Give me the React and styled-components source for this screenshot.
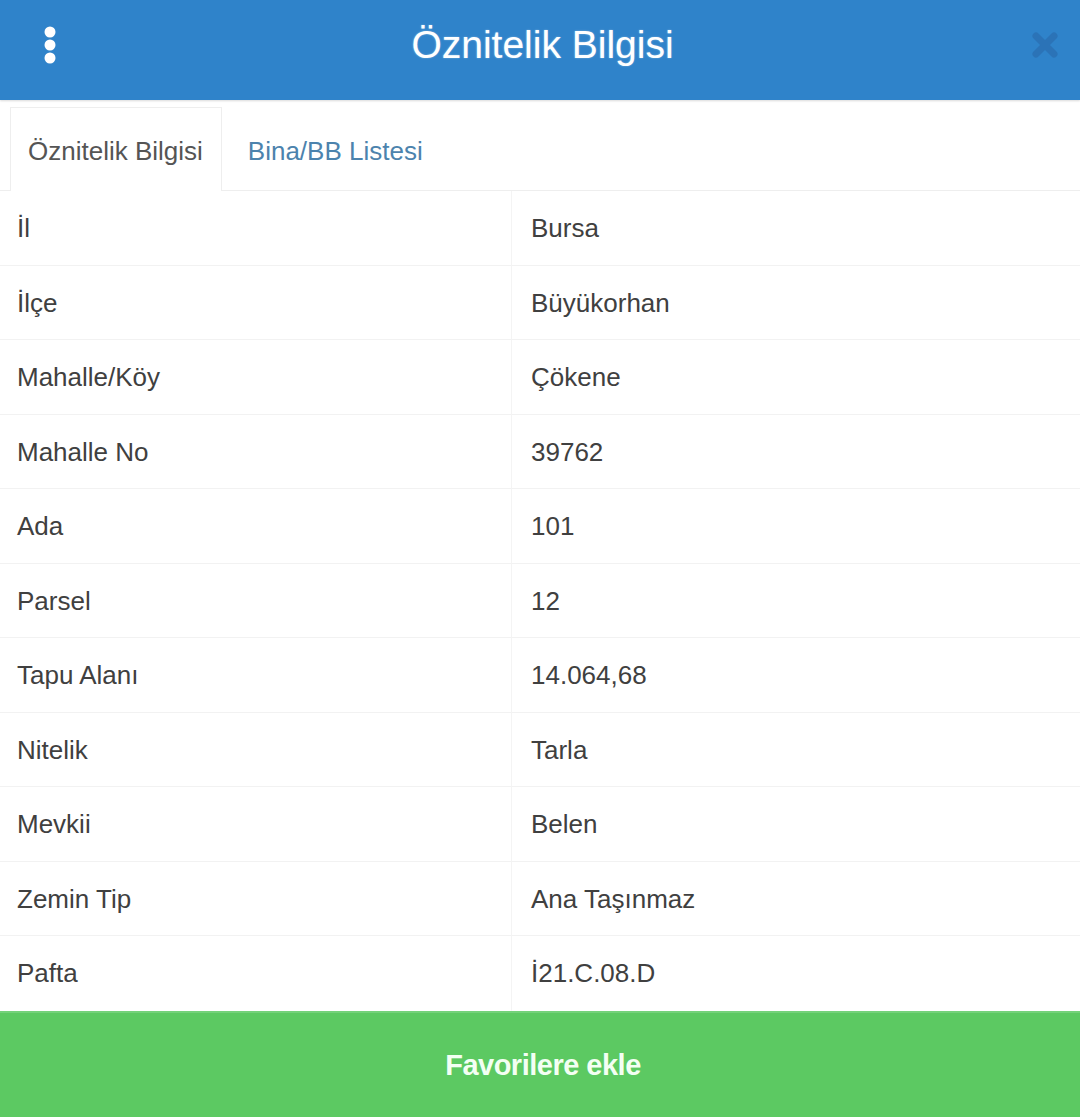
import React from 'react'
import styled, { createGlobalStyle } from 'styled-components'

const GlobalStyle = createGlobalStyle`
    html, body {
        margin: 0;
        padding: 0;
        background: #fff;
    }
    body {
        font-family: Arial, "Liberation Sans", Helvetica, sans-serif;
    }
`

const Panel = styled.div`
    width: 1080px;
    height: 1117px;
    display: flex;
    flex-direction: column;
    background: #fff;
    overflow: hidden;
    font-family: Arial, "Liberation Sans", Helvetica, sans-serif;
`

const Header = styled.header`
    height: 100px;
    flex: none;
    display: flex;
    align-items: center;
    justify-content: space-between;
    padding: 0 17px 10px 32px;
    box-sizing: border-box;
    background: #2f83ca;
    box-shadow: 0 1px 2px rgba(0, 0, 0, 0.15);
`

const Title = styled.h1`
    margin: 0;
    flex: 1;
    text-align: center;
    color: #fff;
    font-size: 39px;
    font-weight: normal;
    padding-right: 10px;
    text-shadow: 0 0 2px rgba(255, 255, 255, 0.4);
`

const IconButton = styled.button`
    border: 0;
    background: none;
    padding: 0;
    width: 36px;
    height: 40px;
    display: flex;
    align-items: center;
    justify-content: center;
`

const Tabs = styled.nav`
    height: 90px;
    flex: none;
    display: flex;
    align-items: flex-end;
    gap: 8px;
    padding-left: 10px;
    border-bottom: 1px solid #eeeeee;
`

const Tab = styled.div`
    display: flex;
    align-items: center;
    padding: 4px 18px 0 17px;
    box-sizing: border-box;
    font-size: 26px;
    color: ${ props => props.active ? '#555' : '#4c83ad' };
    border: 1px solid ${ props => props.active ? '#eeeeee' : 'transparent' };
    border-bottom: 0;
    background: ${ props => props.active ? '#fff' : 'transparent' };
    margin-bottom: ${ props => props.active ? '-1px' : '0' };
    height: ${ props => props.active ? '84px' : '83px' };
`

const Table = styled.div`
    flex: 1;
    display: grid;
    grid-template-columns: 512px 1fr;
    grid-auto-rows: 74.5px;
`

const Cell = styled.div`
    display: flex;
    align-items: center;
    padding: 2px 0 0 ${ props => props.value ? '19px' : '17px' };
    font-size: 26px;
    color: #404040;
    border-bottom: 1px solid ${ props => props.last ? 'transparent' : '#f2f2f2' };
    border-right: ${ props => props.value ? '0' : '1px solid #f4f4f4' };
`

const FavButton = styled.button`
    height: 107px;
    flex: none;
    border: 0;
    background: #5cc962;
    color: #f3fff3;
    font-family: Arial, "Liberation Sans", Helvetica, sans-serif;
    font-size: 29px;
    font-weight: bold;
    letter-spacing: -0.5px;
    padding: 0 0 0 6px;
    border-top: 2px solid #74d27a;
`

const rows = [
    ['İl', 'Bursa'],
    ['İlçe', 'Büyükorhan'],
    ['Mahalle/Köy', 'Çökene'],
    ['Mahalle No', '39762'],
    ['Ada', '101'],
    ['Parsel', '12'],
    ['Tapu Alanı', '14.064,68'],
    ['Nitelik', 'Tarla'],
    ['Mevkii', 'Belen'],
    ['Zemin Tip', 'Ana Taşınmaz'],
    ['Pafta', 'İ21.C.08.D'],
]

const Kebab = () => (
    <svg width="14" height="40" viewBox="0 0 14 40">
        <circle cx="7" cy="7" r="5.5" fill="#fff" />
        <circle cx="7" cy="20" r="5.5" fill="#fff" />
        <circle cx="7" cy="33" r="5.5" fill="#fff" />
    </svg>
)

const CloseIcon = () => (
    <svg width="30" height="30" viewBox="0 0 30 30">
        <path d="M6 6 L24 24 M24 6 L6 24" stroke="#2b73b7" strokeWidth="7" strokeLinecap="round" />
    </svg>
)

export default function App() {
    return (
        <Panel>
            <GlobalStyle />
            <Header>
                <IconButton><Kebab /></IconButton>
                <Title>Öznitelik Bilgisi</Title>
                <IconButton><CloseIcon /></IconButton>
            </Header>
            <Tabs>
                <Tab active>Öznitelik Bilgisi</Tab>
                <Tab>Bina/BB Listesi</Tab>
            </Tabs>
            <Table>
                { rows.map(([label, value], i) => (
                    <React.Fragment key={ label }>
                        <Cell last={ i === rows.length - 1 }>{ label }</Cell>
                        <Cell value last={ i === rows.length - 1 }>{ value }</Cell>
                    </React.Fragment>
                )) }
            </Table>
            <FavButton>Favorilere ekle</FavButton>
        </Panel>
    )
}
